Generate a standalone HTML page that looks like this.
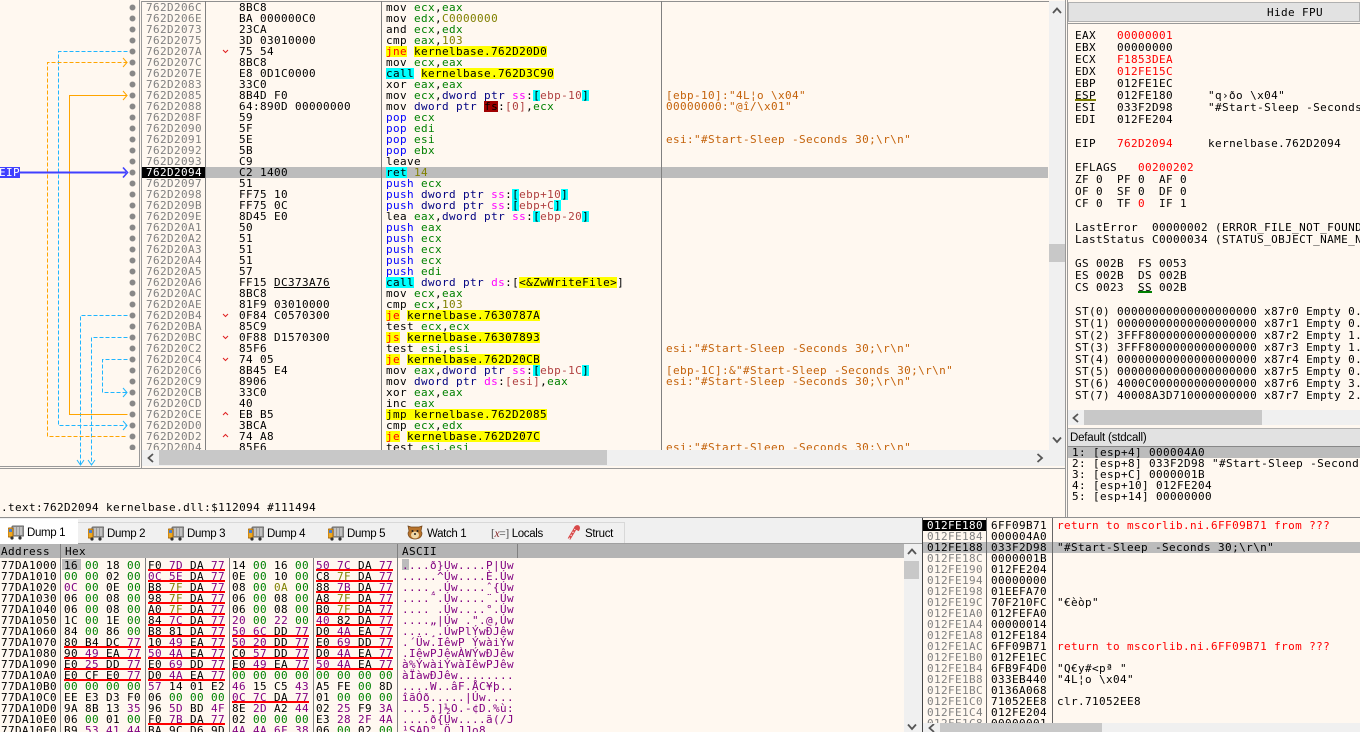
<!DOCTYPE html>
<html><head><meta charset="utf-8"><title>x64dbg</title>
<style>
html,body{margin:0;padding:0;width:1360px;height:732px;overflow:hidden;background:#fff8f0}
body{position:relative;font-family:"DejaVu Sans Mono","Liberation Mono",monospace;font-size:11px;letter-spacing:.38px;color:#000}
div,pre,svg{position:absolute;margin:0}
pre{font:inherit;line-height:11px;white-space:pre;overflow:hidden}
b,i,u,s,em,var{font-style:normal;font-weight:normal;text-decoration:none}
b{color:#008000}i{color:#0000ff}u{color:#808000}s{color:#ff00ff}em{color:#b04040}var{color:#000080}
mark{display:inline-block;height:11px;line-height:11px;color:#000;background:none}
.y{background:#ffff00}.c{background:#00ffff}.ry{background:#ffff00;color:#ff0000}.f{background:#a00000}
.sb{background:#f0f0f0}.th{background:#c8c8c8}
.v{width:1px;background:#808080}
.sel{background:#bcbcbc}
.gh{display:inline-block;width:77px;margin-right:7px;height:11px;vertical-align:top}
.gh.r{box-shadow:inset 0 -2px #f00}
.p{color:#800080}.g{color:#008000}.o{color:#808000}
.red{color:#ff0000}
.tab{top:522px;height:21px;background:#f0f0f0;border-right:1px solid #d8d8d8;border-top:1px solid #d8d8d8;box-sizing:border-box}
.tl{top:528px;font:11.5px/13px "Liberation Sans",sans-serif;letter-spacing:-.35px;color:#000;white-space:pre}
</style></head><body>
<svg width="0" height="0" style="position:absolute"><defs>
<symbol id="bus" viewBox="0 0 16 16"><rect x="4" y="2" width="12" height="10" rx="1" fill="#9a9a9a" stroke="#666"/><rect x="0" y="4" width="5" height="9" rx="1" fill="#f0a820" stroke="#a86a10"/><rect x="1" y="5" width="3" height="3" fill="#4a80d0"/><path d="M7 3v8M10 3v8M13 3v8" stroke="#e8e8e8"/><circle cx="4" cy="14" r="1.6" fill="#333"/><circle cx="12" cy="14" r="1.6" fill="#333"/></symbol>
</defs></svg>

<!-- disassembly structure -->
<div style="left:141px;top:1px;width:908px;height:1px;background:#909090"></div>
<div class="sel" style="left:205px;top:167px;width:843px;height:11px"></div>
<div style="left:142px;top:167px;width:63px;height:11px;background:#000"></div>
<div class="v" style="left:139px;top:0;height:467px;background:#999"></div>
<div class="v" style="left:141px;top:1px;height:467px;background:#999"></div>
<div class="v" style="left:205px;top:1px;height:449px"></div>
<div class="v" style="left:381px;top:1px;height:449px"></div>
<div class="v" style="left:661px;top:1px;height:449px"></div>
<div style="left:129px;top:2px;width:7px;height:448px;background:radial-gradient(circle at 3.5px 5.5px,#888 2.6px,transparent 3.3px) 0 0/7px 11px"></div>

<pre style="left:146px;top:2px;height:448px;color:#808080">762D206C
762D206E
762D2073
762D2075
762D207A
762D207C
762D207E
762D2083
762D2085
762D2088
762D208F
762D2090
762D2091
762D2092
762D2093
<span style="color:#fff">762D2094</span>
762D2097
762D2098
762D209B
762D209E
762D20A1
762D20A2
762D20A3
762D20A4
762D20A5
762D20A6
762D20AC
762D20AE
762D20B4
762D20BA
762D20BC
762D20C2
762D20C4
762D20C6
762D20C9
762D20CB
762D20CD
762D20CE
762D20D0
762D20D2
762D20D4</pre>

<pre style="left:239px;top:2px;height:448px">8BC8
BA 000000C0
23CA
3D 03010000
75 54
8BC8
E8 0D1C0000
33C0
8B4D F0
64:890D 00000000
59
5F
5E
5B
C9
C2 1400
51
FF75 10
FF75 0C
8D45 E0
50
51
51
51
57
FF15 DC373A76
8BC8
81F9 03010000
0F84 C0570300
85C9
0F88 D1570300
85F6
74 05
8B45 E4
8906
33C0
40
EB B5
3BCA
74 A8
85F6</pre>

<pre style="left:386px;top:2px;height:448px">mov <b>ecx</b>,<b>eax</b>
mov <b>edx</b>,<u>C0000000</u>
and <b>ecx</b>,<b>edx</b>
cmp <b>eax</b>,<u>103</u>
<mark class="ry">jne</mark> <mark class="y">kernelbase.762D20D0</mark>
mov <b>ecx</b>,<b>eax</b>
<mark class="c">call</mark> <mark class="y">kernelbase.762D3C90</mark>
xor <b>eax</b>,<b>eax</b>
mov <b>ecx</b>,<var>dword ptr</var> <s>ss</s>:<mark class="c">[</mark><em>ebp-10</em><mark class="c">]</mark>
mov <var>dword ptr</var> <mark class="f">fs</mark>:<em>[0]</em>,<b>ecx</b>
<i>pop</i> <b>ecx</b>
<i>pop</i> <b>edi</b>
<i>pop</i> <b>esi</b>
<i>pop</i> <b>ebx</b>
leave
<mark class="c">ret</mark> <u>14</u>
<i>push</i> <b>ecx</b>
<i>push</i> <var>dword ptr</var> <s>ss</s>:<mark class="c">[</mark><em>ebp+10</em><mark class="c">]</mark>
<i>push</i> <var>dword ptr</var> <s>ss</s>:<mark class="c">[</mark><em>ebp+C</em><mark class="c">]</mark>
lea <b>eax</b>,<var>dword ptr</var> <s>ss</s>:<mark class="c">[</mark><em>ebp-20</em><mark class="c">]</mark>
<i>push</i> <b>eax</b>
<i>push</i> <b>ecx</b>
<i>push</i> <b>ecx</b>
<i>push</i> <b>ecx</b>
<i>push</i> <b>edi</b>
<mark class="c">call</mark> <var>dword ptr</var> <s>ds</s>:[<mark class="y">&lt;&amp;ZwWriteFile&gt;</mark>]
mov <b>ecx</b>,<b>eax</b>
cmp <b>ecx</b>,<u>103</u>
<mark class="ry">je</mark> <mark class="y">kernelbase.7630787A</mark>
test <b>ecx</b>,<b>ecx</b>
<mark class="ry">js</mark> <mark class="y">kernelbase.76307893</mark>
test <b>esi</b>,<b>esi</b>
<mark class="ry">je</mark> <mark class="y">kernelbase.762D20CB</mark>
mov <b>eax</b>,<var>dword ptr</var> <s>ss</s>:<mark class="c">[</mark><em>ebp-1C</em><mark class="c">]</mark>
mov <var>dword ptr</var> <s>ds</s>:<em>[esi]</em>,<b>eax</b>
xor <b>eax</b>,<b>eax</b>
inc <b>eax</b>
<mark class="y">jmp kernelbase.762D2085</mark>
cmp <b>ecx</b>,<b>edx</b>
<mark class="ry">je</mark> <mark class="y">kernelbase.762D207C</mark>
test <b>esi</b>,<b>esi</b></pre>

<pre style="left:666px;top:2px;height:448px;color:#c4620a">








[ebp-10]:"4L¦o \x04"
00000000:"@î/\x01"


esi:"#Start-Sleep -Seconds 30;\r\n"


















esi:"#Start-Sleep -Seconds 30;\r\n"

[ebp-1C]:&amp;"#Start-Sleep -Seconds 30;\r\n"
esi:"#Start-Sleep -Seconds 30;\r\n"





esi:"#Start-Sleep -Seconds 30;\r\n"</pre>

<!-- branch lines & gutter -->
<svg style="left:0;top:0" width="340" height="470" fill="none" shape-rendering="crispEdges">
<g stroke="#1fb6ff" stroke-dasharray="4 2">
<path d="M127.5 51.5H58.5V425.5H127"/>
<path d="M127.5 315.5H80.5V464"/>
<path d="M127.5 337.5H91.5V464"/>
<path d="M127.5 359.5H102.5V392.5H127"/>
</g>
<path d="M127.5 62.5H47.5V436.5H127.5" stroke="#ffa500" stroke-dasharray="4 2"/>
<path d="M127.5 95.5H69.5V414.5H127.5" stroke="#ffa500"/>
<g shape-rendering="auto">
<path d="M123 58l4 4.500-4 4.500M123 91l4 4.500-4 4.500" stroke="#ffa500"/>
<path d="M123 388l4 4.500-4 4.500M123 421l4 4.500-4 4.500M77 460l3.500 5 3.500-5M88 460l3.500 5 3.500-5" stroke="#1fb6ff"/>
<path d="M20 172.500H126" stroke="#4040ff" stroke-width="2"/>
<path d="M123 167.500l4.500 5-4.500 5" stroke="#4040ff" stroke-width="1.600"/>
<path d="M223 50l2.500 2.500 2.500-2.500M223 314l2.500 2.500 2.500-2.500M223 336l2.500 2.500 2.500-2.500M223 358l2.500 2.500 2.500-2.500M223 415l2.500-2.500 2.500 2.500M223 437l2.500-2.500 2.500 2.500" stroke="#e02020" stroke-width="1"/>
</g>
<path d="M274 287.500H330" stroke="#000"/>
</svg>
<div style="left:0;top:167px;width:20px;height:11px;background:#4040ff"></div>
<pre style="left:-1px;top:167px;color:#fff">EIP</pre>

<!-- disasm scrollbars -->
<div class="sb" style="left:142px;top:450px;width:923px;height:16px"></div>
<div class="th" style="left:159px;top:450px;width:448px;height:15px"></div>
<svg style="left:146px;top:452px" width="10" height="12" fill="none" stroke="#555" stroke-width="1.800"><path d="M7 2L2.500 6 7 10"/></svg>
<svg style="left:1035px;top:452px" width="10" height="12" fill="none" stroke="#555" stroke-width="1.800"><path d="M2.500 2L7 6 2.500 10"/></svg>
<div class="sb" style="left:1049px;top:1px;width:16px;height:465px"></div>
<div class="th" style="left:1049px;top:244px;width:16px;height:18px"></div>
<svg style="left:1051px;top:6px" width="12" height="10" fill="none" stroke="#555" stroke-width="1.800"><path d="M2 7L6 2.500 10 7"/></svg>
<svg style="left:1051px;top:435px" width="12" height="10" fill="none" stroke="#555" stroke-width="1.800"><path d="M2 2.500L6 7 10 2.500"/></svg>

<div style="left:0;top:466px;width:140px;height:1px;background:#999"></div>
<div style="left:0;top:468px;width:1065px;height:1px;background:#999"></div>
<pre style="left:1px;top:502px">.text:762D2094 kernelbase.dll:$112094 #111494</pre>

<!-- vertical splitters -->
<div class="v" style="left:1065px;top:0;height:517px;background:#999"></div>
<div class="v" style="left:1067px;top:0;height:517px;background:#999"></div>

<!-- Registers -->
<div style="left:1068px;top:2px;width:292px;height:20px;background:#e2e2e2;border:1px solid #b0b0b0;box-sizing:border-box"></div>
<pre style="left:1267px;top:7px">Hide FPU</pre>
<div style="left:1068px;top:23px;width:292px;height:1px;background:#999"></div>
<pre style="left:1075px;top:30px;line-height:12px;width:285px;height:378px">EAX   <span class="red">00000001</span>
EBX   00000000
ECX   <span class="red">F1853DEA</span>
EDX   <span class="red">012FE15C</span>
EBP   012FE1EC
ESP   012FE180     "q›ðo \x04"
ESI   033F2D98     "#Start-Sleep -Seconds 30;\r\n"
EDI   012FE204

EIP   <span class="red">762D2094</span>     kernelbase.762D2094

EFLAGS   <span class="red">00200202</span>
ZF 0  PF 0  AF 0
OF 0  SF 0  DF 0
CF 0  TF <span class="red">0</span>  IF 1

LastError  00000002 (ERROR_FILE_NOT_FOUND)
LastStatus C0000034 (STATUS_OBJECT_NAME_NOT_FOUND)

GS 002B  FS 0053
ES 002B  DS 002B
CS 0023  SS 002B

ST(0) 00000000000000000000 x87r0 Empty 0.000
ST(1) 00000000000000000000 x87r1 Empty 0.000
ST(2) 3FFF8000000000000000 x87r2 Empty 1.000
ST(3) 3FFF8000000000000000 x87r3 Empty 1.000
ST(4) 00000000000000000000 x87r4 Empty 0.000
ST(5) 00000000000000000000 x87r5 Empty 0.000
ST(6) 4000C000000000000000 x87r6 Empty 3.000
ST(7) 40008A3D710000000000 x87r7 Empty 2.000</pre>
<div style="left:1075px;top:99px;width:21px;height:2px;background:#808000"></div>
<div style="left:1138px;top:291px;width:14px;height:2px;background:#008000"></div>
<div class="sb" style="left:1068px;top:410px;width:292px;height:15px"></div>
<div class="th" style="left:1084px;top:410px;width:178px;height:15px"></div>
<svg style="left:1071px;top:412px" width="10" height="12" fill="none" stroke="#555" stroke-width="1.800"><path d="M7 2L2.500 6 7 10"/></svg>
<div style="left:1068px;top:428px;width:292px;height:18px;background:#e2e2e2;border-top:1px solid #b0b0b0;box-sizing:border-box"></div>
<div style="left:1070px;top:432px;font:11.500px/13px 'Liberation Sans',sans-serif;letter-spacing:-.2px;white-space:pre">Default (stdcall)</div>
<div style="left:1068px;top:446px;width:292px;height:1px;background:#888"></div>
<div class="sel" style="left:1068px;top:447px;width:292px;height:11px"></div>
<pre style="left:1072px;top:447px;width:288px;height:60px">1: [esp+4] 000004A0
2: [esp+8] 033F2D98 "#Start-Sleep -Seconds 30;\r\n"
3: [esp+C] 0000001B
4: [esp+10] 012FE204
5: [esp+14] 00000000</pre>

<div style="left:0;top:517px;width:1360px;height:1px;background:#909090"></div>

<!-- Tabs -->
<div class="sb" style="left:0;top:518px;width:922px;height:26px"></div>
<div class="tab" style="left:78px;width:80px"></div>
<div class="tab" style="left:157px;width:80px"></div>
<div class="tab" style="left:236px;width:81px"></div>
<div class="tab" style="left:316px;width:81px"></div>
<div class="tab" style="left:396px;width:85px"></div>
<div class="tab" style="left:480px;width:74px"></div>
<div class="tab" style="left:553px;width:72px"></div>
<div style="left:0;top:519px;width:78px;height:25px;background:#fff"></div>
<div style="left:0;top:543px;width:922px;height:1px;background:#a0a0a0"></div>
<div style="left:0;top:543px;width:78px;height:1px;background:#fff"></div>
<svg style="left:8px;top:524px" width="16" height="16"><use href="#bus"/></svg>
<svg style="left:88px;top:525px" width="16" height="16"><use href="#bus"/></svg>
<svg style="left:168px;top:525px" width="16" height="16"><use href="#bus"/></svg>
<svg style="left:248px;top:525px" width="16" height="16"><use href="#bus"/></svg>
<svg style="left:328px;top:525px" width="16" height="16"><use href="#bus"/></svg>
<div class="tl" style="left:27px;top:527px">Dump 1</div>
<div class="tl" style="left:107px">Dump 2</div>
<div class="tl" style="left:187px">Dump 3</div>
<div class="tl" style="left:267px">Dump 4</div>
<div class="tl" style="left:347px">Dump 5</div>
<svg style="left:407px;top:524px" width="16" height="16" viewBox="0 0 16 16"><path d="M1 2l3 1h8l3-1-1 5 1 2c0 4-3 6-7 6s-7-2-7-6l1-2z" fill="#b8742c" stroke="#70441a" stroke-width=".7"/><ellipse cx="8" cy="11" rx="4" ry="3.500" fill="#f0d8a8"/><circle cx="5.500" cy="7" r="1" fill="#222"/><circle cx="10.500" cy="7" r="1" fill="#222"/><circle cx="8" cy="10" r="1" fill="#222"/></svg>
<div class="tl" style="left:427px">Watch 1</div>
<div class="tl" style="left:491px"><span style="font-family:'Liberation Serif',serif;color:#444">[<span style="font-style:italic;color:#802020">x</span>=]</span> Locals</div>
<svg style="left:567px;top:523px" width="13" height="18" viewBox="0 0 13 18" fill="none"><path d="M2 16L8 6c1-3 3.500-3 3.500-1 0 1-.5 1.500-1 2.500" stroke="#d84848" stroke-width="3"/><path d="M2 16L8 6" stroke="#f8e0e0" stroke-width="1.200" stroke-dasharray="1.500 2"/></svg>
<div class="tl" style="left:585px">Struct</div>

<!-- Dump -->
<div style="left:0;top:544px;width:904px;height:14px;background:#b4b4b4"></div>
<pre style="left:1px;top:546px">Address</pre>
<pre style="left:65px;top:546px">Hex</pre>
<pre style="left:402px;top:546px">ASCII</pre>
<div class="v" style="left:60px;top:544px;height:188px"></div>
<div class="v" style="left:145px;top:558px;height:174px"></div>
<div class="v" style="left:229px;top:558px;height:174px"></div>
<div class="v" style="left:313px;top:558px;height:174px"></div>
<div class="v" style="left:397px;top:544px;height:188px"></div>
<div class="v" style="left:517px;top:544px;height:14px"></div>
<div class="sel" style="left:62px;top:559px;width:19px;height:11px"></div>
<div class="sel" style="left:402px;top:559px;width:7px;height:11px"></div>
<pre style="left:1px;top:560px;height:172px">77DA1000
77DA1010
77DA1020
77DA1030
77DA1040
77DA1050
77DA1060
77DA1070
77DA1080
77DA1090
77DA10A0
77DA10B0
77DA10C0
77DA10D0
77DA10E0
77DA10F0</pre>
<pre style="left:64px;top:560px;height:172px;width:340px"><span class="gh">16 <b>00</b> 18 <b>00</b></span><span class="gh r">F0 <span class="p">7D</span> DA <span class="p">77</span></span><span class="gh">14 <b>00</b> 16 <b>00</b></span><span class="gh r"><span class="p">50 7C</span> DA <span class="p">77</span></span>
<span class="gh"><b>00 00</b> 02 <b>00</b></span><span class="gh r"><span class="p">0C 5E</span> DA <span class="p">77</span></span><span class="gh">0E <b>00</b> 10 <b>00</b></span><span class="gh r">C8 <u>7F</u> DA <span class="p">77</span></span>
<span class="gh"><span class="p">0C</span> <b>00</b> 0E <b>00</b></span><span class="gh r">B8 <u>7F</u> DA <span class="p">77</span></span><span class="gh">08 <b>00</b> <u>0A</u> <b>00</b></span><span class="gh r">88 <span class="p">7B</span> DA <span class="p">77</span></span>
<span class="gh">06 <b>00</b> 08 <b>00</b></span><span class="gh r">98 <u>7F</u> DA <span class="p">77</span></span><span class="gh">06 <b>00</b> 08 <b>00</b></span><span class="gh r">A8 <u>7F</u> DA <span class="p">77</span></span>
<span class="gh">06 <b>00</b> 08 <b>00</b></span><span class="gh r">A0 <u>7F</u> DA <span class="p">77</span></span><span class="gh">06 <b>00</b> 08 <b>00</b></span><span class="gh r">B0 <u>7F</u> DA <span class="p">77</span></span>
<span class="gh">1C <b>00</b> 1E <b>00</b></span><span class="gh r">84 <span class="p">7C</span> DA <span class="p">77</span></span><span class="gh"><span class="p">20</span> <b>00</b> <span class="p">22</span> <b>00</b></span><span class="gh r"><span class="p">40</span> 82 DA <span class="p">77</span></span>
<span class="gh">84 <b>00</b> 86 <b>00</b></span><span class="gh r">B8 81 DA <span class="p">77</span></span><span class="gh r"><span class="p">50 6C</span> DD <span class="p">77</span></span><span class="gh r">D0 <span class="p">4A</span> EA <span class="p">77</span></span>
<span class="gh r">80 B4 DC <span class="p">77</span></span><span class="gh r">10 <span class="p">49</span> EA <span class="p">77</span></span><span class="gh r"><span class="p">50 20</span> DD <span class="p">77</span></span><span class="gh r">E0 <span class="p">69</span> DD <span class="p">77</span></span>
<span class="gh r">90 <span class="p">49</span> EA <span class="p">77</span></span><span class="gh r"><span class="p">50 4A</span> EA <span class="p">77</span></span><span class="gh r">C0 <span class="p">57</span> DD <span class="p">77</span></span><span class="gh r">D0 <span class="p">4A</span> EA <span class="p">77</span></span>
<span class="gh r">E0 <span class="p">25</span> DD <span class="p">77</span></span><span class="gh r">E0 <span class="p">69</span> DD <span class="p">77</span></span><span class="gh r">E0 <span class="p">49</span> EA <span class="p">77</span></span><span class="gh r"><span class="p">50 4A</span> EA <span class="p">77</span></span>
<span class="gh r">E0 CF E0 <span class="p">77</span></span><span class="gh r">D0 <span class="p">4A</span> EA <span class="p">77</span></span><span class="gh"><b>00 00 00 00</b></span><span class="gh"><b>00 00 00 00</b></span>
<span class="gh"><b>00 00 00 00</b></span><span class="gh"><span class="p">57</span> 14 01 E2</span><span class="gh"><span class="p">46</span> 15 C5 <span class="p">43</span></span><span class="gh">A5 FE <b>00</b> 8D</span>
<span class="gh">EE E3 D3 F0</span><span class="gh">06 <b>00 00 00</b></span><span class="gh r"><span class="p">0C 7C</span> DA <span class="p">77</span></span><span class="gh">01 <b>00 00 00</b></span>
<span class="gh">9A 8B 13 <span class="p">35</span></span><span class="gh">96 <span class="p">5D</span> BD <span class="p">4F</span></span><span class="gh">8E <span class="p">2D</span> A2 <span class="p">44</span></span><span class="gh">02 <span class="p">25</span> F9 <span class="p">3A</span></span>
<span class="gh">06 <b>00</b> 01 <b>00</b></span><span class="gh r">F0 <span class="p">7B</span> DA <span class="p">77</span></span><span class="gh">02 <b>00 00 00</b></span><span class="gh">E3 <span class="p">28 2F 4A</span></span>
<span class="gh">B9 <span class="p">53 41 44</span></span><span class="gh">BA 9C D6 9D</span><span class="gh"><span class="p">4A 4A 6F 38</span></span><span class="gh">06 <b>00</b> 02 <b>00</b></span></pre>
<pre class="p" style="left:402px;top:560px;height:172px">....ð}Úw....P|Úw
.....^Úw....È.Úw
....¸.Úw....ˆ{Úw
....˜.Úw....¨.Úw
.... .Úw....°.Úw
....„|Úw .".@‚Úw
....¸.ÚwPlÝwÐJêw
.´Üw.IêwP ÝwàiÝw
.IêwPJêwÀWÝwÐJêw
à%ÝwàiÝwàIêwPJêw
àÏàwÐJêw........
....W..âF.ÅC¥þ..
îãÓð.....|Úw....
...5.]½O.-¢D.%ù:
....ð{Úw....ã(/J
¹SAD°.Ö.JJo8....</pre>
<div class="sb" style="left:904px;top:544px;width:18px;height:188px"></div>
<div class="th" style="left:904px;top:561px;width:15px;height:18px"></div>
<svg style="left:906px;top:547px" width="12" height="10" fill="none" stroke="#555" stroke-width="1.800"><path d="M2 7L6 2.500 10 7"/></svg>
<svg style="left:906px;top:722px" width="12" height="10" fill="none" stroke="#555" stroke-width="1.800"><path d="M2 2.500L6 7 10 2.500"/></svg>

<!-- Stack -->
<div style="left:922px;top:518px;width:1px;height:214px;background:#444"></div>
<div class="sel" style="left:923px;top:542px;width:437px;height:11px"></div>
<div style="left:923px;top:520px;width:63px;height:11px;background:#000"></div>
<div style="left:986px;top:518px;width:1px;height:205px;background:#666"></div>
<div style="left:1052px;top:518px;width:1px;height:205px;background:#666"></div>
<pre style="left:927px;top:520px;height:203px;color:#808080"><span style="color:#fff">012FE180</span>
012FE184
<span style="color:#000">012FE188</span>
012FE18C
012FE190
012FE194
012FE198
012FE19C
012FE1A0
012FE1A4
012FE1A8
012FE1AC
012FE1B0
012FE1B4
012FE1B8
012FE1BC
012FE1C0
012FE1C4
012FE1C8</pre>
<pre style="left:991px;top:520px;height:203px">6FF09B71
000004A0
033F2D98
0000001B
012FE204
00000000
01EEFA70
70F210FC
012FEFA0
00000014
012FE184
6FF09B71
012FE1EC
6FB9F4D0
033EB440
0136A068
71052EE8
012FE204
00000001</pre>
<pre style="left:1057px;top:520px;height:203px"><span class="red">return to mscorlib.ni.6FF09B71 from ???</span>

"#Start-Sleep -Seconds 30;\r\n"




"€èòp"



<span class="red">return to mscorlib.ni.6FF09B71 from ???</span>

"Q€y#&lt;pª "
"4L¦o \x04"

clr.71052EE8</pre>
<div class="sb" style="left:923px;top:723px;width:437px;height:9px"></div>
<div class="th" style="left:940px;top:723px;width:162px;height:9px"></div>
<svg style="left:927px;top:724px" width="10" height="8" fill="none" stroke="#555" stroke-width="1.800"><path d="M7 0L2.500 4 7 8"/></svg>
</body></html>
